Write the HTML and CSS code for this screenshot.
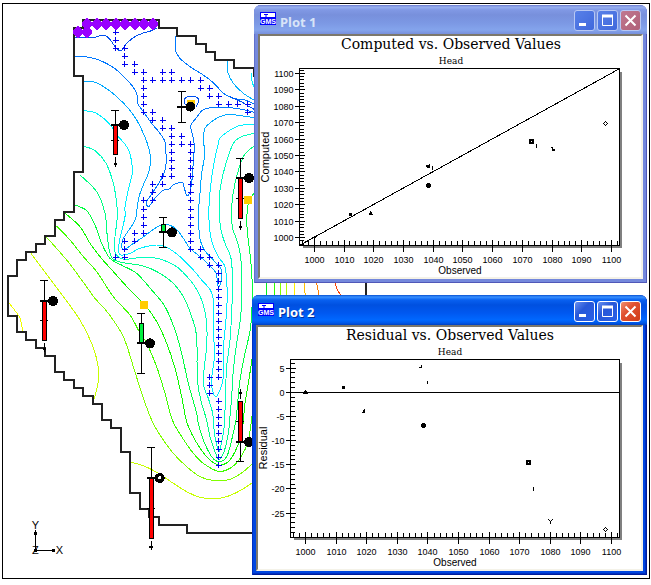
FILE: index.html
```html
<!DOCTYPE html>
<html lang="en">
<head>
<meta charset="utf-8">
<title>GMS</title>
<link rel="stylesheet" href="styles.css">
</head>
<body>
<main class="desktop">
  <div class="frame"></div>
  <svg class="map" viewBox="0 0 1953 1755" role="img" aria-label="Head contours with calibration targets">
    <g id="contours"></g>
    <path class="boundary" d="M762 230V204H702V181H645V156H618V132H589V108H531V84H477V60H249V84H222V228H249V516H222V636H192V660H165V708H135V732H108V756H78V780H51V828H24V948H51V996H78V1020H108V1044H135V1068H165V1116H192V1140H222V1164H249V1188H279V1212H306V1260H333V1284H362V1356H390V1479H420V1527H447V1551H477V1575H561V1599H780M1098 840V900"/>
    <path class="drain" id="drain"/>
    <path class="head" id="head"/>
    <g class="well">
      <rect x="561" y="299" width="24" height="24"/>
      <rect x="731" y="587" width="25" height="25"/>
      <rect x="420" y="904" width="24" height="23"/>
    </g>
    <g id="targets"></g>
    <g class="triad">
      <path d="M106 1590V1651H160"/>
      <path class="dot" d="M102 1599h9M106 1595v9M102 1651h9M106 1647v9M156 1651h10M160 1647v9"/>
      <text x="106" y="1587">Y</text>
      <text x="106" y="1663">Z</text>
      <text x="178" y="1663">X</text>
    </g>
  </svg>

  <section class="window plot-1 inactive" aria-label="Plot 1">
    <header class="titlebar">
      <svg class="app-icon" viewBox="0 0 16 13" aria-hidden="true"><rect width="16" height="13" fill="#00f"/><path d="M1 1h14v4H1z" fill="#fff"/><path d="M4 2.500h4M6 2v3" stroke="#00f"/><text x="8" y="11.500">GMS</text></svg>
      <h2>Plot 1</h2>
      <button class="min" aria-label="Minimize"><svg viewBox="0 0 21 21"><path d="M5 14.500h7" stroke-width="3"/></svg></button>
      <button class="max" aria-label="Maximize"><svg viewBox="0 0 21 21"><path d="M5.500 6v9.500h10V6M5 6.500h11" /><path d="M5 6h11" stroke-width="3"/></svg></button>
      <button class="close" aria-label="Close"><svg viewBox="0 0 21 21"><path d="M5.500 5.500l10 10M15.500 5.500l-10 10" stroke-width="2"/></svg></button>
    </header>
    <div class="client"><svg class="chart" id="chart-1" viewBox="260 36 381 241" role="img" aria-label="Computed vs. Observed Values"></svg></div>
  </section>

  <section class="window plot-2" aria-label="Plot 2">
    <header class="titlebar">
      <svg class="app-icon" viewBox="0 0 16 13" aria-hidden="true"><rect width="16" height="13" fill="#00f"/><path d="M1 1h14v4H1z" fill="#fff"/><path d="M4 2.500h4M6 2v3" stroke="#00f"/><text x="8" y="11.500">GMS</text></svg>
      <h2>Plot 2</h2>
      <button class="min" aria-label="Minimize"><svg viewBox="0 0 21 21"><path d="M5 14.500h7" stroke-width="3"/></svg></button>
      <button class="max" aria-label="Maximize"><svg viewBox="0 0 21 21"><path d="M5.500 6v9.500h10V6M5 6.500h11" /><path d="M5 6h11" stroke-width="3"/></svg></button>
      <button class="close" aria-label="Close"><svg viewBox="0 0 21 21"><path d="M5.500 5.500l10 10M15.500 5.500l-10 10" stroke-width="2"/></svg></button>
    </header>
    <div class="client"><svg class="chart" id="chart-2" viewBox="258 327 383 242" role="img" aria-label="Residual vs. Observed Values"></svg></div>
  </section>
</main>
<script src="plots.js"></script>
</body>
</html>
```
FILE: styles.css
```css
* {
  box-sizing: border-box;
}

body {
  margin: 0;
  background: #fff;
  font-family: "Liberation Sans", Arial, sans-serif;
}

.desktop {
  position: relative;
  display: grid;
  min-height: 100vh;
  overflow: hidden;
}

.frame {
  margin: 3px 1px 6px 2px;
  border: 1px solid #000;
}

.map {
  position: absolute;
  left: 0;
  top: 0;
  width: 651px;
  height: 585px;
  fill: none;
  shape-rendering: crispEdges;
}

.contour {
  stroke-width: 3;
}

.boundary {
  stroke: #222;
  stroke-width: 6;
}

.drain {
  stroke: #0000f0;
  stroke-width: 3;
}

.head {
  fill: #90f;
}

.well {
  fill: #fc0;
}

.stem,
.arrow {
  stroke: #000;
  stroke-width: 3;
}

.tick {
  stroke: #000;
  stroke-width: 6;
}

.dot {
  stroke: #000;
  stroke-width: 6;
}

.bar {
  stroke: #000;
  stroke-width: 3;
}

.bar.over { fill: #f00; }
.bar.under { fill: #00f040; }

.disc { fill: #000; }
.hole { fill: #fff; }

.triad path {
  stroke: #000;
  stroke-width: 3;
}

.triad .dot {
  stroke-width: 9;
}

.triad text {
  fill: #000;
  font-size: 33px;
  text-anchor: middle;
}

.window {
  position: absolute;
  padding: 0 4px 4px;
  border-radius: 7px 7px 0 0;
  background: #0046e0;
  box-shadow: inset 1px 0 #0030c0, inset -1px -1px #001c9c, inset -2px -2px #0030c0;
}

.window.inactive {
  background: #7488dc;
  box-shadow: inset 1px 0 #6070cc, inset -1px -1px #5058b8;
}

.plot-1 {
  left: 254px;
  top: 5px;
  width: 393px;
}

.plot-2 {
  left: 252px;
  top: 295px;
  width: 395px;
}

.titlebar {
  display: flex;
  align-items: center;
  gap: 2px;
  height: 30px;
  margin: 0 -4px;
  padding: 2px 6px 0;
  border-radius: 7px 7px 0 0;
  background: linear-gradient(#0850d0 0, #3890ff 2px, #0860f0 5px, #0050e0 10px, #0058f0 18px, #0068ff 25px, #0058e8 28px, #0040c0 30px);
}

.inactive .titlebar {
  height: 29px;
  background: linear-gradient(#6878cc 0, #98b0f0 2px, #8098e4 5px, #7890dc 10px, #7c98e4 18px, #84a4ec 25px, #7890dc 29px);
}

.app-icon {
  width: 16px;
  height: 13px;
  margin-bottom: 4px;
}

.app-icon text {
  fill: #fff;
  font-size: 7px;
  font-weight: bold;
  text-anchor: middle;
}

.titlebar h2 {
  flex: 1;
  margin: 2px 0 0 2px;
  color: #fff;
  font: bold 13px/18px "Noto Sans", sans-serif;
  text-shadow: 1px 1px #0030a0;
}

.inactive h2 {
  color: #d8e4f8;
  text-shadow: none;
}

.titlebar button {
  width: 21px;
  height: 21px;
  padding: 0;
  border: 1px solid #fff;
  border-radius: 3px;
  background: linear-gradient(135deg, #6890f0, #2858d8 40%, #2860e8);
}

.titlebar .close {
  background: linear-gradient(135deg, #f09070, #e05030 40%, #d03c18);
}

.inactive .titlebar button {
  border-color: #b8c8f4;
  background: linear-gradient(135deg, #5880e8, #4068dc);
}

.inactive .titlebar .close {
  background: linear-gradient(135deg, #c07890, #b06078);
}

.titlebar button svg {
  display: block;
  width: 21px;
  height: 21px;
  margin: -1px;
  fill: none;
  stroke: #fff;
}

.client {
  border: 2px solid;
  border-color: #7c786c #f4f2e8 #f4f2e8 #7c786c;
  background: #fff;
}

.chart {
  display: block;
  width: 100%;
  height: auto;
  fill: none;
  stroke: #000;
}

.chart path {
  shape-rendering: crispEdges;
}

.chart .shadow {
  stroke: #808080;
  stroke-width: 2;
}

.chart .solid {
  fill: #000;
}

.chart text {
  fill: #000;
  stroke: none;
  text-anchor: middle;
}

.chart .title {
  font: 14px "DejaVu Serif", serif;
}

.chart .subtitle {
  font: 9px "DejaVu Serif", serif;
}

.chart .x-label {
  font-size: 9px;
}

.chart .y-label {
  font-size: 9px;
  text-anchor: end;
}

.chart .x-name {
  font-size: 10px;
}

.chart .y-name {
  font-size: 11px;
}
```
FILE: plots.js
```js
const NS = 'http://www.w3.org/2000/svg';

function add(parent, tag, attrs, text) {
  const node = document.createElementNS(NS, tag);
  for (const key in attrs) node.setAttribute(key, attrs[key]);
  if (text !== undefined) node.textContent = text;
  parent.appendChild(node);
  return node;
}

// Catmull-Rom spline through a flat list of coordinates.
function spline(flat) {
  const p = [];
  for (let i = 0; i < flat.length; i += 2) p.push([flat[i], flat[i + 1]]);
  let d = `M${p[0]}`;
  for (let i = 0; i < p.length - 1; i++) {
    const a = p[i - 1] || p[i], b = p[i], c = p[i + 1], e = p[i + 2] || c;
    d += `C${b[0] + (c[0] - a[0]) / 6} ${b[1] + (c[1] - a[1]) / 6} ${c[0] - (e[0] - b[0]) / 6} ${c[1] - (e[1] - b[1]) / 6} ${c}`;
  }
  return d;
}

const contours = [
  ['#0050f0', [222,112, 282,112, 300,107, 318,108, 330,118, 345,140, 358,152, 368,148, 380,130, 405,110, 430,99, 455,92, 470,84]],
  ['#0078ff', [222,169, 255,170, 285,176, 315,188, 345,206, 375,234, 400,262, 411,285, 414,312, 430,335, 455,370, 480,400, 495,425, 497,450, 499,485, 490,525, 460,575, 440,605, 446,620, 462,598, 488,572, 508,567, 520,555, 547,547, 553,565, 561,587, 570,575, 577,530, 580,480, 583,440, 578,405, 572,378, 590,352, 608,330, 635,323, 690,323, 730,329, 762,337]],
  ['#0078ff', [528,108, 526,150, 540,175, 570,200, 605,222, 630,240, 650,258, 670,280, 700,295, 735,300, 762,312]],
  ['#0050f0', [690,290, 725,306, 745,318, 762,328]],
  ['#0050f0', [556,315, 552,302, 562,290, 588,291, 596,303, 588,320]],
  ['#00a8ff', [249,243, 285,247, 320,266, 350,290, 385,325, 410,360, 430,400, 445,440, 452,480, 445,520, 432,550, 417,590, 412,620, 408,652, 400,670, 380,700, 368,720, 366,745, 375,748, 400,730, 430,711, 460,688, 485,675, 505,674, 530,688, 550,715, 570,745, 600,770, 630,797, 648,820, 652,845, 655,862, 662,850, 665,825, 662,805, 640,780, 615,753, 602,725, 597,690, 595,640, 600,580, 605,520, 612,480, 614,450, 610,420, 615,385, 635,365, 660,350, 685,343, 715,346, 740,350, 762,352]],
  ['#00f0ff', [249,331, 285,338, 310,354, 335,380, 355,410, 373,430, 388,455, 397,500, 397,520, 385,570, 375,620, 375,650, 360,715, 355,750, 362,765, 390,760, 420,745, 470,735, 500,742, 540,770, 580,810, 605,840, 632,872, 641,910, 641,990, 643,1070, 638,1110, 635,1140, 637,1170, 648,1190, 662,1165, 670,1130, 670,1080, 672,1020, 677,970, 682,890, 680,850, 675,800, 655,770, 637,730, 628,680, 628,600, 640,500, 655,430, 660,415, 680,397, 715,378, 762,372]],
  ['#00ffc0', [249,438, 285,452, 318,490, 340,550, 350,610, 352,650, 345,710, 343,750, 355,770, 375,778, 430,772, 480,777, 530,800, 570,840, 592,872, 610,915, 620,970, 620,1040, 612,1110, 612,1160, 625,1195, 638,1240, 641,1275, 645,1310, 657,1355, 666,1320, 672,1285, 675,1230, 677,1170, 680,1100, 690,1020, 695,940, 697,870, 697,820, 692,770, 675,730, 663,690, 658,640, 660,570, 675,500, 695,440, 708,420, 730,408, 762,400]],
  ['#00ff80', [240,525, 290,575, 315,640, 322,710, 332,765, 355,785, 430,798, 480,820, 520,850, 550,890, 575,950, 590,1010, 592,1140, 605,1210, 620,1260, 630,1310, 645,1355, 657,1378, 672,1355, 685,1300, 690,1250, 695,1190, 700,1110, 710,1030, 722,950, 725,870, 722,770, 710,720, 697,680, 695,620, 705,550, 730,470, 762,438]],
  ['#00ff40', [225,615, 260,632, 285,675, 305,730, 330,775, 370,798, 410,820, 455,870, 495,920, 525,990, 545,1060, 565,1150, 590,1240, 595,1270, 610,1320, 635,1370, 657,1385, 680,1370, 695,1320, 708,1260, 712,1220, 720,1140, 735,1060, 752,980, 757,870, 752,780, 741,680, 745,610, 762,580]],
  ['#10f800', [192,637, 240,680, 270,730, 300,770, 340,815, 388,868, 435,915, 470,965, 500,1030, 525,1105, 545,1190, 560,1265, 585,1320, 620,1370, 655,1395, 685,1385, 705,1355, 725,1300, 735,1210, 745,1150, 762,1040]],
  ['#40ff00', [170,678, 210,720, 250,770, 290,815, 340,890, 390,945, 415,990, 440,1030, 470,1100, 495,1180, 517,1260, 545,1310, 580,1360, 610,1390, 655,1414, 690,1405, 720,1375, 745,1320, 762,1200]],
  ['#80ff00', [140,712, 200,780, 245,840, 285,895, 325,940, 370,1010, 400,1100, 425,1180, 455,1260, 480,1305, 520,1360, 560,1400, 600,1430, 645,1442, 690,1438, 730,1415, 762,1386]],
  ['#c8ff00', [93,760, 130,810, 190,890, 240,960, 275,1030, 293,1090, 295,1140, 287,1180, 282,1196]],
  ['#c8ff00', [392,1387, 430,1397, 470,1417, 520,1450, 560,1475, 600,1492, 640,1496, 680,1490, 720,1472, 762,1445]],
  ['#f0ff00', [24,905, 45,932, 60,955, 68,992]],
  ['#00b0ff', [683,181, 683,215, 700,250, 730,280, 762,300]],
  ['#00f0ff', [755,220, 755,240, 762,262]],
  ['#00f020', [799,845, 799,890]],
  ['#30ff00', [823,845, 823,890]],
  ['#80ff00', [841,845, 841,890]],
  ['#b0ff00', [859,845, 859,890]],
  ['#fff000', [882,845, 885,890]],
  ['#ffc000', [912,845, 916,890]],
  ['#ff8000', [949,845, 958,890]],
  ['#ff4000', [1005,845, 1010,865, 1024,888]]
];
const contourLayer = document.getElementById('contours');
for (const [stroke, points] of contours) add(contourLayer, 'path', { class: 'contour', stroke, d: spline(points) });

// Drain cells, listed by row.
const drains = {
  97: [347], 121: [347], 145: [347, 374], 169: [374], 193: [374, 404], 216: [404, 431, 488, 515],
  240: [431, 458, 488, 515, 545, 572, 602], 265: [431, 602, 629], 289: [431, 629, 656],
  313: [431, 656, 686, 713, 743], 337: [431, 458, 743], 361: [458, 488], 385: [488, 515],
  409: [515, 545], 433: [515, 545, 572], 457: [515, 572], 481: [515, 572], 505: [515, 572],
  529: [488, 515, 572], 553: [458, 488, 572], 577: [458, 572], 601: [431, 458, 572],
  628: [431, 572], 652: [431, 572], 676: [431, 572], 700: [404, 431, 572], 724: [374, 404, 572],
  748: [374, 572, 602], 772: [347, 374, 602, 629], 796: [629, 656], 1132: [629, 656],
  1156: [629], 1180: [629]
};
for (let y = 820; y <= 1108; y += 24) drains[y] = [656];
for (let y = 1204; y <= 1396; y += 24) drains[y] = [656];
document.getElementById('drain').setAttribute('d', Object.entries(drains)
  .flatMap(([y, xs]) => xs.map(x => `M${x} ${y - 9}v18M${x - 9} ${y}h18`)).join(''));

document.getElementById('head').setAttribute('d',
  [[261,72],[291,72],[318,72],[348,72],[375,72],[405,72],[432,72],[459,72],[234,96],[261,96]]
    .map(([x, y]) => `M${x - 17} ${y}l13 -17h8l13 17l-13 17h-8z`).join(''));

// Calibration targets: whisker span, observed level, error bar and arrow.
const targets = [
  { x: 545, top: 275, bottom: 367, level: 320 },
  { x: 346, top: 331, level: 375, bar: [375, 463], mid: 421, arrow: [472, 500, 492] },
  { x: 721, top: 475, level: 534, bar: [534, 656], mid: 595, arrow: [664, 691, 682] },
  { x: 490, top: 653, bottom: 742, level: 697, bar: [673, 697], good: true },
  { x: 133, top: 841, level: 903, bar: [903, 1022], mid: 962, arrow: [1030, 1055, 1046] },
  { x: 424, top: 941, bottom: 1120, level: 1030, bar: [970, 1030], good: true },
  { x: 721, bottom: 1384, level: 1326, bar: [1204, 1326], mid: 1264, arrow: [1168, 1196, 1178] },
  { x: 453, top: 1343, level: 1434, bar: [1434, 1616], mid: 1525, arrow: [1623, 1650, 1641], hole: true }
];
const targetLayer = document.getElementById('targets');
for (const t of targets) {
  let d = `M${t.x} ${t.top || t.level}V${t.bottom || t.level}`;
  if (t.top) d += `M${t.x - 12} ${t.top}h24`;
  if (t.bottom) d += `M${t.x - 12} ${t.bottom}h24`;
  if (t.mid) d += `M${t.x - 13} ${t.mid}h24`;
  add(targetLayer, 'path', { class: 'stem', d });
  if (t.bar) add(targetLayer, 'rect', { class: t.good ? 'bar under' : 'bar over', x: t.x - 6, y: t.bar[0], width: 12, height: t.bar[1] - t.bar[0] });
  add(targetLayer, 'path', { class: 'tick', d: `M${t.x - 13} ${t.level}h28` });
  add(targetLayer, 'circle', { class: 'disc', cx: t.x + 26, cy: t.level, r: 15 });
  if (t.hole) add(targetLayer, 'circle', { class: 'hole', cx: t.x + 27, cy: t.level, r: 5 });
  if (t.arrow) {
    add(targetLayer, 'path', { class: 'arrow', d: `M${t.x} ${t.arrow[0]}V${t.arrow[1]}` });
    add(targetLayer, 'path', { class: 'dot', d: `M${t.x - 5} ${t.arrow[2]}h10` });
  }
}

function drawChart(id, c) {
  const svg = document.getElementById(id);
  const { left, top, right, bottom } = c;
  const px = v => Math.floor(c.x0 + (v - 1000) * c.xStep) + 0.5;
  const py = v => Math.floor(c.y0 - (v - c.yBase) * c.yStep) + 0.5;
  const center = c.center;
  add(svg, 'path', { class: 'shadow', d: `M${left + 3} ${bottom + 1.5}H${right + 1.5}V${top + 3}` });
  let d = `M${left} ${top}H${right}V${bottom}H${left}Z` + c.line;
  for (let v = 996; v <= 1102; v += 2) {
    const major = v % 10 === 0;
    d += major ? `M${px(v)} ${bottom - 6}V${bottom + 6}` : `M${px(v)} ${bottom - 5}V${bottom}`;
    if (major) add(svg, 'text', { class: 'x-label', x: px(v), y: bottom + 17 }, v);
  }
  for (let v = c.yMin; v <= c.yMax; v += c.yMinor) {
    const major = v % c.yMajor === 0;
    d += major ? `M${left - 5} ${py(v)}H${left + 5}` : `M${left} ${py(v)}h4`;
    if (major) add(svg, 'text', { class: 'y-label', x: left - 6, y: py(v) + 3.5 }, v);
  }
  add(svg, 'path', { d });
  add(svg, 'text', { class: 'title', x: center, y: c.titleY }, c.title);
  add(svg, 'text', { class: 'subtitle', x: center, y: c.titleY + 15 }, 'Head');
  add(svg, 'text', { class: 'x-name', x: c.nameX, y: bottom + 28 }, 'Observed');
  const [nx, ny] = c.yNameAt;
  add(svg, 'text', { class: 'y-name', x: nx, y: ny, transform: `rotate(-90 ${nx} ${ny})` }, c.yName);
  add(svg, 'path', { class: 'solid', stroke: 'none', d: c.solid });
  add(svg, 'path', { d: c.marks });
}

drawChart('chart-1', {
  left: 299.5, top: 68.5, right: 619.5, bottom: 245.5, center: 451, titleY: 49, nameX: 460,
  x0: 314.3, xStep: 2.973, y0: 237.6, yStep: 1.643, yBase: 1000,
  yMin: 996, yMax: 1102, yMinor: 2, yMajor: 10,
  title: 'Computed vs. Observed Values', yName: 'Computed', yNameAt: [269, 157],
  line: 'M302 244L619 69',
  solid: 'M349 213h3v3h-3zM369 214l2-4v2h1v3h-3zM426 165h3v-1h1v4h-3zM427 183h3v1h1v3h-1v1h-3v-1h-1v-3h1zM552 148h1v1h2v2h-3zM529 139h5v5h-5z',
  marks: 'M312 237.500h4M314.500 236v4M370 214.500h3M432.500 166v4M536.500 144v4M551 147.500h2M603.500 123.500l2-2l2 2l-2 2zM605.500 121v1M605.500 125v1'
});

drawChart('chart-2', {
  left: 290.5, top: 359.5, right: 619.5, bottom: 537.5, center: 450, titleY: 340, nameX: 455,
  x0: 305.4, xStep: 3.062, y0: 392.3, yStep: 4.83, yBase: 0,
  yMin: -29, yMax: 6, yMinor: 1, yMajor: 5,
  title: 'Residual vs. Observed Values', yName: 'Residual', yNameAt: [267, 448],
  line: 'M290 392.500H619',
  solid: 'M303 394l2-4h1l2 4zM342 386h3v3h-3zM362 413l2-4h1v4zM422 423h3v1h1v3h-1v1h-3v-1h-1v-3h1zM526 460h5v5h-5z',
  marks: 'M419 367.500h3M421.500 365v3M427.500 381v3M533.500 487v4M548 519.500h1M549.500 520v1M550 521.500h1M550.500 521v3M551.500 520v1M552 519.500h1M603.500 529.500l2-2l2 2l-2 2zM605.500 527v1M605.500 531v1'
});

// White centre of the two square markers.
add(document.getElementById('chart-1'), 'rect', { x: 531, y: 141, width: 1, height: 1, fill: '#fff', stroke: 'none' });
add(document.getElementById('chart-2'), 'rect', { x: 528, y: 462, width: 1, height: 1, fill: '#fff', stroke: 'none' });
```
